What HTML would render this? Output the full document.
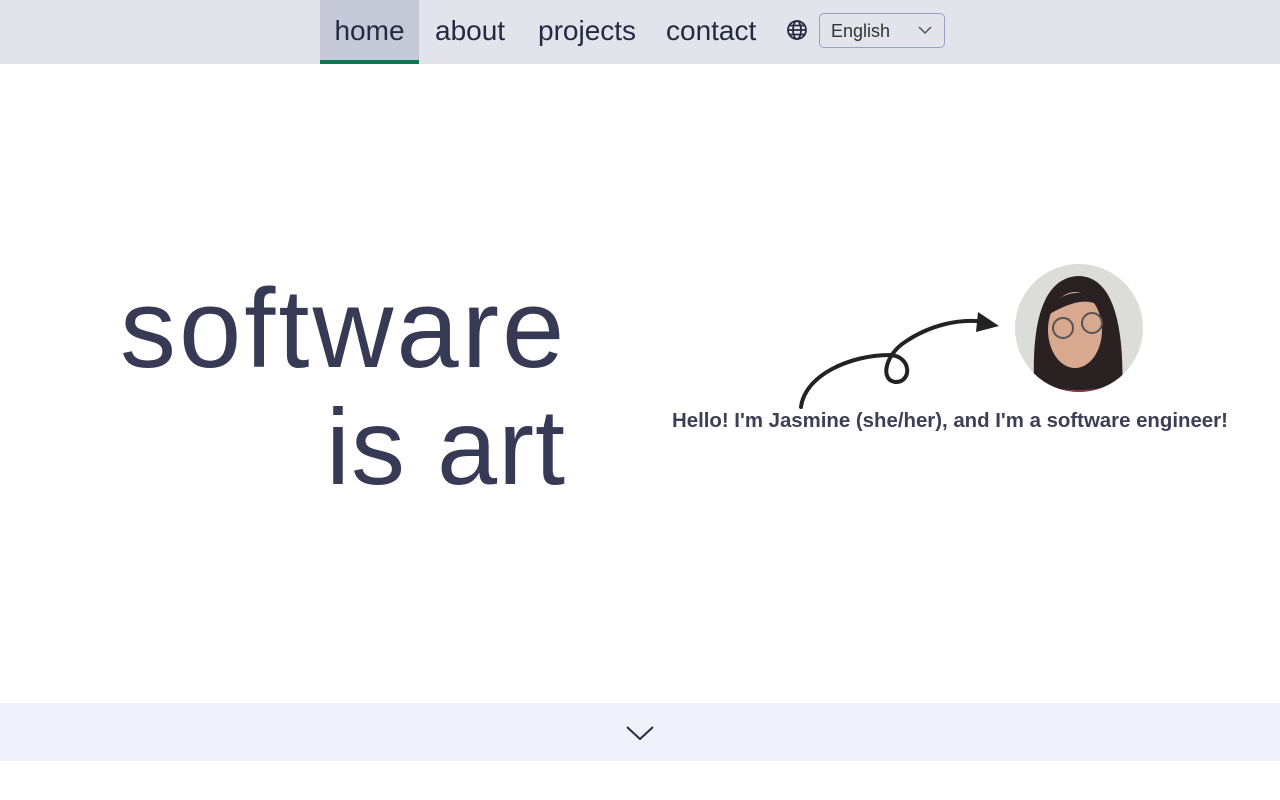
<!DOCTYPE html>
<html><head><meta charset="utf-8"><style>
body{margin:0;width:1280px;height:800px;background:#fff;font-family:"Liberation Sans",sans-serif;position:relative;overflow:hidden;color:#333850}
nav{position:absolute;left:0;top:0;width:1280px;height:64px;background:#e3e3ec}
.item{position:absolute;top:0;height:64px;line-height:62px;font-size:28px;color:#262a40;font-weight:300}
.home{left:320px;width:99px;background:#c5c9d8;text-align:center;border-bottom:4px solid #0b7a55;height:60px;line-height:62px}
.sel{position:absolute;left:819px;top:13px;width:124px;height:33px;border:1px solid #9aa0c0;border-radius:5px;font-size:18px;line-height:34px;color:#333}
.big{position:absolute;font-size:112px;color:#363a55;font-weight:300}
.hello{position:absolute;left:672px;top:410px;font-size:20.4px;font-weight:bold;color:#3d4055}
.bar{position:absolute;left:0;top:703px;width:1280px;height:58px;background:#eff2fa}
</style></head><body>
<nav>
<div class="item home">home</div>
<div class="item" style="left:435px">about</div>
<div class="item" style="left:538px">projects</div>
<div class="item" style="left:666px">contact</div>
<svg style="position:absolute;left:786px;top:19px" width="22" height="22" viewBox="0 0 22 22" fill="none" stroke="#262a40" stroke-width="1.8"><circle cx="11" cy="11" r="9"/><ellipse cx="11" cy="11" rx="4" ry="9"/><path d="M2 11h18M3.5 6.5h15M3.5 15.5h15"/></svg>
<div class="sel"><span style="margin-left:11px">English</span><svg style="position:absolute;left:98px;top:11px" width="14" height="10" viewBox="0 0 14 10" fill="none" stroke="#555" stroke-width="1.5"><path d="M1 2l6 6 6-6"/></svg></div>
</nav>
<div class="big" style="left:120px;top:264px;letter-spacing:3px">software</div>
<div class="big" style="left:326px;top:384px;font-size:108px;letter-spacing:1px">is art</div>
<svg style="position:absolute;left:0;top:0" width="1280" height="800">
<path d="M801 407 C805 375 850 355 890 355 C912 356 912 383 895 382 C880 380 885 355 905 342 C930 325 960 318 985 322" fill="none" stroke="#222" stroke-width="4" stroke-linecap="round"/>
<path d="M978 312 L999 326 L976 332 Z" fill="#222"/>
<defs><clipPath id="c"><circle cx="1079" cy="328" r="64"/></clipPath></defs>
<g clip-path="url(#c)">
<rect x="1010" y="260" width="140" height="140" fill="#dcdcd8"/>
<path d="M1035 400 C1030 330 1040 278 1078 276 C1115 276 1125 330 1122 400Z" fill="#2a2222"/>
<ellipse cx="1075" cy="330" rx="27" ry="38" fill="#d8a98e"/>
<path d="M1048 315 C1055 288 1095 285 1104 310 C1095 300 1080 296 1048 315Z" fill="#2a2222"/>
<circle cx="1063" cy="328" r="10" fill="none" stroke="#555" stroke-width="2"/>
<circle cx="1092" cy="323" r="10" fill="none" stroke="#555" stroke-width="2"/>
<path d="M1040 385 Q1078 395 1115 385 L1120 400 L1038 400Z" fill="#8a3a4a"/>
</g>
</svg>
<div class="hello">Hello! I'm Jasmine (she/her), and I'm a software engineer!</div>
<div class="bar"><svg style="position:absolute;left:626px;top:22px" width="28" height="16" viewBox="0 0 28 16" fill="none" stroke="#262a40" stroke-width="2"><path d="M1 2l13 12 13-12"/></svg></div>
</body></html>
